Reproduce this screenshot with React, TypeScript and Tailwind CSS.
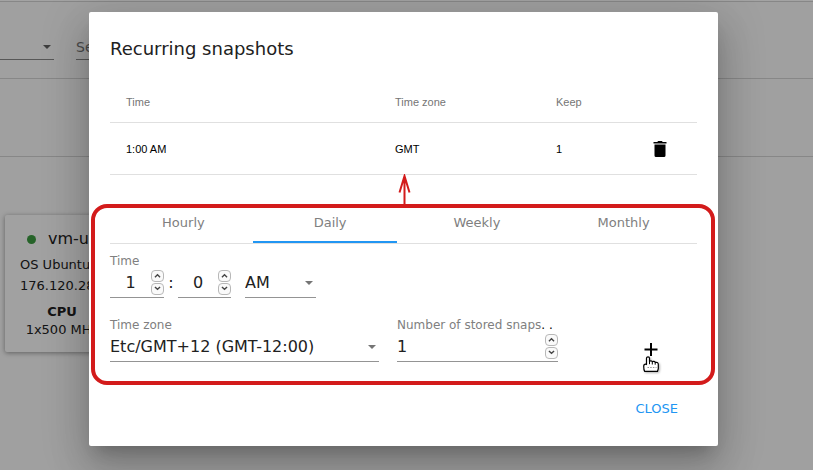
import { useState } from "react";

const TABS = ["Hourly", "Daily", "Weekly", "Monthly"];

function Chevron({ up = false }: { up?: boolean }) {
  return (
    <svg viewBox="0 0 12 12" className="h-3 w-3" fill="none" stroke="#444" strokeWidth="1.5">
      <path d={up ? "M3.2 7.3 6 4.7l2.8 2.6" : "M3.2 3.7 6 6.300l2.8-2.6"} />
    </svg>
  );
}

function NumberInput({
  id,
  label,
  initial,
  center = false,
}: {
  id: string;
  label: string;
  initial: number;
  center?: boolean;
}) {
  const [value, setValue] = useState(initial);
  const stepButton =
    "flex h-3 w-[13px] items-center justify-center rounded-[4px] border border-[#b8b8b8] bg-[#fafafa]";
  return (
    <div className="flex h-[29px] items-center border-b border-[#949494]">
      <input
        id={id}
        type="number"
        aria-label={label}
        value={value}
        onChange={(e) => setValue(Number(e.target.value))}
        className={`min-w-0 flex-1 bg-transparent text-base leading-6 outline-none [appearance:textfield] [&::-webkit-inner-spin-button]:appearance-none ${center ? "text-center" : ""}`}
      />
      <div className="flex flex-col gap-px">
        <button type="button" aria-label={`Increase ${label}`} className={stepButton} onClick={() => setValue(value + 1)}>
          <Chevron up />
        </button>
        <button type="button" aria-label={`Decrease ${label}`} className={stepButton} onClick={() => setValue(value - 1)}>
          <Chevron />
        </button>
      </div>
    </div>
  );
}

function SelectInput({ id, label, options }: { id: string; label: string; options: string[] }) {
  return (
    <div className="grid h-[29px] items-center border-b border-[#949494]">
      <select
        id={id}
        aria-label={label}
        className="col-start-1 row-start-1 w-full appearance-none bg-transparent pr-6 text-base leading-6 outline-none"
      >
        {options.map((option) => (
          <option key={option}>{option}</option>
        ))}
      </select>
      <svg
        viewBox="0 0 8 4"
        className="pointer-events-none col-start-1 row-start-1 mr-[3px] h-1 w-2 justify-self-end fill-[#757575]"
      >
        <path d="M0 0h8L4 4z" />
      </svg>
    </div>
  );
}

function Background() {
  return (
    <div className="min-h-screen bg-[#fafafa] text-[#212121]">
      <div className="mt-px flex h-[78px] items-start gap-[22px] border-y border-[#d4d4d4] pt-8">
        <div className="flex h-[26px] w-[54px] items-center justify-end border-b border-[#888] pr-[3px]">
          <svg viewBox="0 0 8 4" className="h-1 w-2 fill-[#616161]">
            <path d="M0 0h8L4 4z" />
          </svg>
        </div>
        <input
          type="text"
          placeholder="Search"
          aria-label="Search"
          className="h-[26px] w-40 border-b border-[#888] bg-transparent text-sm placeholder:text-[#757575]"
        />
      </div>
      <div className="h-[78px] border-b border-[#d4d4d4]" />
      <article className="mt-[58px] ml-[5px] flex h-[137px] w-44 flex-col rounded-xs bg-[#fcfcfc] pt-3 pl-[15px] text-[13px] shadow-[0_1px_5px_rgba(0,0,0,0.4)]">
        <h3 className="flex items-center gap-3 pl-[7px] text-base leading-6">
          <span className="size-[9px] rounded-full bg-[#3c9c41]" />
          <span>vm-ubuntu</span>
        </h3>
        <p className="mt-[3px] leading-[21px]">OS Ubuntu</p>
        <p className="leading-[21px]">176.120.28.14</p>
        <div className="mt-[7px] w-[84px] text-center leading-[18px] whitespace-nowrap">
          <p className="font-bold">CPU</p>
          <p>1x500 MHz</p>
        </div>
      </article>
    </div>
  );
}

function HandCursor() {
  return (
    <svg
      viewBox="0 0 16 17"
      className="pointer-events-none absolute top-[15px] left-0 h-[17px] w-4 drop-shadow-[1px_1px_1px_rgba(0,0,0,0.3)]"
      fill="#fff"
      stroke="#000"
      strokeWidth="1.2"
      strokeLinejoin="round"
    >
      <path d="M3.500 8.500V2.200C3.500.3 6.500.3 6.500 2.200V5.400C7.200 4.500 9 4.700 9.300 5.700 10.200 5 12 5.400 12.200 6.400 13.600 6 15.300 6.700 15.300 8.200v4.200c0 1.300-.8 1.800-.8 3H1.700C.8 14 .7 12 .7 9.900.7 8.400 2.600 7.800 3.500 8.500z" />
      <path d="M6.500 5.400v2.800M9.300 5.700v2.800M12.200 6.400v2.300" strokeWidth="1" />
      <path d="M4.500 11.500h9" stroke="#777" strokeWidth=".8" strokeDasharray="1.5 1.2" />
    </svg>
  );
}

export default function App() {
  const [tab, setTab] = useState("Daily");
  return (
    <div className="relative h-screen overflow-hidden font-['DejaVu_Sans',sans-serif] text-[#212121]">
      <Background />
      <div className="absolute inset-0 bg-black/36 pt-3 pr-[95px] pl-[89px]">
        <div
          role="dialog"
          aria-labelledby="dialog-title"
          className="rounded-xs bg-white pt-[23px] pb-[19px] shadow-[0_11px_15px_-7px_rgba(0,0,0,0.2),0_24px_38px_3px_rgba(0,0,0,0.14),0_9px_46px_8px_rgba(0,0,0,0.12)]"
        >
          <h2 id="dialog-title" className="px-[21px] text-lg leading-7">
            Recurring snapshots
          </h2>
          <div className="mt-[18px] px-[21px]">
            <table className="w-full table-fixed text-left font-['Liberation_Sans',sans-serif] text-[11px]">
              <thead>
                <tr className="h-[41px] border-b border-[#e0e0e0] text-[#757575]">
                  <th className="w-[269px] px-4 pt-0.5 font-normal">Time</th>
                  <th className="w-[161px] px-4 pt-0.5 font-normal">Time zone</th>
                  <th className="px-4 pt-0.5 font-normal">Keep</th>
                  <th className="w-[74px]" aria-label="Actions" />
                </tr>
              </thead>
              <tbody>
                <tr className="h-[52px] border-b border-[#e0e0e0] text-black">
                  <td className="px-4 pt-0.5">1:00 AM</td>
                  <td className="px-4 pt-0.5">GMT</td>
                  <td className="px-4 pt-0.5">1</td>
                  <td className="pt-0.5">
                    <button type="button" aria-label="Delete" className="mx-auto block">
                      <svg viewBox="0 0 14 18" className="h-[18px] w-3.5">
                        <path d="M1.500 4.500h11V15.500q0 1.500-1.500 1.500H3q-1.500 0-1.500-1.500zM.5 2h3.700L5.200 1h3.600l1 1h3.700v1.500H.5z" />
                      </svg>
                    </button>
                  </td>
                </tr>
              </tbody>
            </table>
          </div>

          <section className="relative mt-[29px] mr-[3px] ml-0.5 rounded-[16px] border-4 border-[#d31b1b] pr-3.5 pb-[19px] pl-[15px]">
            <svg
              viewBox="0 0 14 34"
              className="absolute -top-[34px] left-[303px] h-[34px] w-3.5"
              fill="none"
              stroke="#d31b1b"
              strokeWidth="2"
            >
              <path d="M6.500 34V2M1.500 18.500 6.500 2l5 16.500" />
            </svg>
            <div role="tablist" className="flex h-9 border-b border-[#e0e0e0]">
              {TABS.map((name) => (
                <button
                  key={name}
                  type="button"
                  role="tab"
                  aria-selected={tab === name}
                  onClick={() => setTab(name)}
                  className="relative flex-1 pb-1 text-[13px] text-[#808080]"
                >
                  {name}
                  {tab === name && <span className="absolute bottom-0 right-[7px] -left-1 h-0.5 bg-[#2196f3]" />}
                </button>
              ))}
            </div>

            <fieldset className="mt-[9px]">
              <legend className="text-xs leading-4 text-[#808080]">Time</legend>
              <div className="flex">
                <div className="w-[54px]">
                  <NumberInput id="hour" label="Hour" initial={1} center />
                </div>
                <span className="w-3.5 text-center text-base leading-7">:</span>
                <div className="w-[53px]">
                  <NumberInput id="minute" label="Minute" initial={0} center />
                </div>
                <div className="ml-3.5 w-[71px]">
                  <SelectInput id="period" label="AM or PM" options={["AM", "PM"]} />
                </div>
              </div>
            </fieldset>

            <div className="mt-[19px] flex">
              <div className="w-[269px]">
                <label htmlFor="zone" className="block text-xs leading-4 text-[#808080]">
                  Time zone
                </label>
                <SelectInput id="zone" label="Time zone" options={["Etc/GMT+12 (GMT-12:00)", "GMT"]} />
              </div>
              <div className="ml-[18px] w-[161px]">
                <label htmlFor="keep" className="block text-xs leading-4 whitespace-nowrap text-[#808080]">
                  Number of stored snaps<span className="text-black">. .</span>
                </label>
                <NumberInput id="keep" label="Number of stored snaps" initial={1} />
              </div>
              <div className="flex flex-1 justify-center pt-6 pl-[46px]">
                <button type="button" aria-label="Add" className="relative h-[17px] w-4">
                  <svg viewBox="0 0 16 17" className="h-[17px] w-4" stroke="#000" strokeWidth="2">
                    <path d="M8 2v13M1.500 8.500h13" />
                  </svg>
                  <HandCursor />
                </button>
              </div>
            </div>
          </section>

          <div className="mt-1.5 flex justify-end pr-8">
            <button type="button" className="h-9 px-2 text-[13px] text-[#2196f3]">
              CLOSE
            </button>
          </div>
        </div>
      </div>
    </div>
  );
}
